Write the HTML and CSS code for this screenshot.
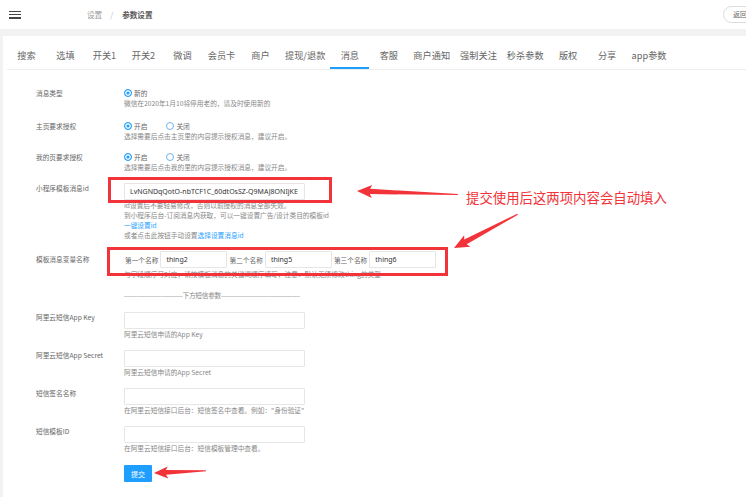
FILE: index.html
```html
<!DOCTYPE html>
<html>
<head>
    <meta charset="UTF-8">
    <title>参数设置</title>
    <link rel="stylesheet" href="styles.css">
</head>
<body>
<div class="header">
    <span class="menu-btn"><i></i><i></i><i></i></span>
    <div class="crumb"><a href="javascript:;">设置</a><span class="sep">/</span><b>参数设置</b></div>
    <a class="back" href="javascript:;">返回</a>
</div>
<div class="page">
    <div class="panel">
        <ul class="tabs">
            <li>搜索</li>
            <li>选填</li>
            <li>开关1</li>
            <li>开关2</li>
            <li>微调</li>
            <li>会员卡</li>
            <li>商户</li>
            <li>提现/退款</li>
            <li class="on">消息</li>
            <li>客服</li>
            <li>商户通知</li>
            <li>强制关注</li>
            <li>秒杀参数</li>
            <li>版权</li>
            <li>分享</li>
            <li>app参数</li>
        </ul>
        <form class="form">
            <div class="row r-radio">
                <label class="lab">消息类型</label>
                <div class="ctl">
                    <div class="radios"><span class="radio checked"></span><span class="rtxt">新的</span></div>
                    <p class="tip">微信在2020年1月10将停用老的，请及时使用新的</p>
                </div>
            </div>
            <div class="row r-radio">
                <label class="lab">主页要求授权</label>
                <div class="ctl">
                    <div class="radios"><span class="radio checked"></span><span class="rtxt">开启</span><span class="radio"></span><span class="rtxt">关闭</span></div>
                    <p class="tip">选择需要后点击主页里的内容提示授权消息，建议开启。</p>
                </div>
            </div>
            <div class="row r-radio">
                <label class="lab">我的页要求授权</label>
                <div class="ctl">
                    <div class="radios"><span class="radio checked"></span><span class="rtxt">开启</span><span class="radio"></span><span class="rtxt">关闭</span></div>
                    <p class="tip">选择需要后点击我的里的内容提示授权消息，建议开启。</p>
                </div>
            </div>
            <div class="row">
                <label class="lab">小程序模板消息id</label>
                <div class="ctl">
                    <input class="ipt" type="text" value="LvNGNDqQotO-nbTCF1C_60dtOsSZ-Q9MAJ8ONIjKE">
                    <p class="tip">id设置后不要轻易修改，否则以前授权的消息全部失效。</p>
                    <p class="tip">到小程序后台-订阅消息内获取，可以一键设置广告/设计类目的模板id</p>
                    <p class="tip"><a href="javascript:;">一键设置id</a></p>
                    <p class="tip">或者点击此按钮手动设置<a href="javascript:;">选择设置消息id</a></p>
                </div>
            </div>
            <div class="row r-vars">
                <label class="lab">模板消息变量名称</label>
                <div class="ctl">
                    <div class="vars">
                        <span>第一个名称</span><input class="ipt sm" type="text" value="thing2">
                        <span>第二个名称</span><input class="ipt sm" type="text" value="thing5">
                        <span>第三个名称</span><input class="ipt sm" type="text" value="thing6">
                    </div>
                    <p class="tip">与字段顺序号对应，请按模板消息的关键词顺序填写，注意：默认无须修改thing的类型</p>
                </div>
            </div>
            <div class="row r-line">
                <label class="lab"></label>
                <div class="ctl"><p class="tip dash">-----------------------------下方短信参数---------------------------------------</p></div>
            </div>
            <div class="row">
                <label class="lab">阿里云短信App Key</label>
                <div class="ctl">
                    <input class="ipt" type="text">
                    <p class="tip">阿里云短信申请的App Key</p>
                </div>
            </div>
            <div class="row">
                <label class="lab">阿里云短信App Secret</label>
                <div class="ctl">
                    <input class="ipt" type="text">
                    <p class="tip">阿里云短信申请的App Secret</p>
                </div>
            </div>
            <div class="row">
                <label class="lab">短信签名名称</label>
                <div class="ctl">
                    <input class="ipt" type="text">
                    <p class="tip">在阿里云短信接口后台：短信签名中查看。例如："身份验证"</p>
                </div>
            </div>
            <div class="row">
                <label class="lab">短信模板ID</label>
                <div class="ctl">
                    <input class="ipt" type="text">
                    <p class="tip">在阿里云短信接口后台：短信模板管理中查看。</p>
                </div>
            </div>
            <div class="row">
                <label class="lab"></label>
                <div class="ctl"><button class="btn" type="button">提交</button></div>
            </div>
        </form>
    </div>
</div>

<!-- 标注 -->
<div class="mark mark1"></div>
<div class="mark mark2"></div>
<div class="note">提交使用后这两项内容会自动填入</div>
<svg class="arrows" width="746" height="497" viewBox="0 0 746 497">
    <g fill="#f2333a">
        <polygon transform="translate(357 191) rotate(2)" points="0,0 15,-6.5 13,-2.6 101,-0.6 101,0.6 13,2.6 15,6.5"/>
        <polygon transform="translate(454 248) rotate(-28)" points="0,0 15,-6.5 13,-2.6 72,-0.6 72,0.6 13,2.6 15,6.5"/>
        <polygon transform="translate(154 473) rotate(-2.5)" points="0,0 14,-6 12,-2.4 52,-0.5 52,0.5 12,2.4 14,6"/>
    </g>
</svg>
</body>
</html>
```
FILE: styles.css
```css
*{margin:0;padding:0;box-sizing:border-box;}
html,body{width:746px;height:497px;overflow:hidden;}
body{background:#f2f2f2;font-family:"Noto Sans CJK SC","Noto Sans",sans-serif;color:#666;position:relative;}
ul,li{list-style:none;}
a{text-decoration:none;}

.header{height:29px;background:#fff;display:flex;align-items:center;overflow:hidden;}
.menu-btn{display:flex;flex-direction:column;justify-content:space-between;width:12px;height:8px;margin-left:9px;}
.menu-btn i{display:block;height:1.2px;background:#444;}
.crumb{margin-left:66px;font-size:7.6px;line-height:10px;color:#999;}
.crumb a{color:#999;}
.crumb .sep{margin:0 9px 0 8px;color:#bbb;}
.crumb b{color:#555;font-weight:bold;}
.back{margin-left:auto;margin-right:-12px;height:17px;line-height:15px;padding:0 10px 0 9px;border:1px solid #ddd;border-radius:9px;font-size:7px;color:#666;}

.page{padding:7px 0 0 3px;height:468px;}
.panel{background:#fff;height:100%;}

.tabs{display:flex;margin:0 0 0 4px;padding-top:5px;border-bottom:1px solid #eee;}
.tabs li{min-width:39px;height:28px;line-height:28px;padding:0 5px;text-align:center;font-size:9.2px;color:#666;white-space:nowrap;}
.tabs li.on{box-shadow:inset 0 -2px 0 #1e9fff;}

.form{padding:18px 0 0 33px;font-size:6.7px;}
.row{display:flex;margin-bottom:11px;}
.row.r-radio:first-child{margin-bottom:13px;}
.lab{width:88px;flex:none;line-height:10px;color:#666;}
.ctl{flex:1;}
.tip{line-height:10px;color:#888;white-space:nowrap;}
.tip a{color:#1e9fff;}
.radios{display:flex;align-items:center;height:10px;}
.radio{width:8px;height:8px;border:1px solid #6fb4f0;border-radius:50%;margin-right:2px;}
.radio.checked{border-color:#1e9fff;background:#1e9fff;box-shadow:inset 0 0 0 1.4px #fff;}
.rtxt{color:#666;margin-right:19px;}

.ipt{display:block;width:181px;height:17px;border:1px solid #e6e6e6;border-radius:1px;padding:0 5px;font-family:"Noto Sans","Noto Sans CJK SC",sans-serif;font-size:7px;color:#333;outline:none;background:#fff;}
.r-vars{margin-top:3px;}
.r-vars .lab{padding-top:3px;}
.r-vars .tip{margin-top:1px;}
.vars{display:flex;align-items:center;height:17px;}
.vars span{margin:0 2px 0 1px;color:#666;}
.ipt.sm{width:67px;margin-right:1px;}
.r-line{margin-top:0;margin-bottom:12px;}
.dash{letter-spacing:-0.3px;color:#888;}

.btn{width:28px;height:17px;border:0;border-radius:1px;background:#1e9fff;color:#fff;font-family:"Noto Sans CJK SC",sans-serif;font-size:7px;margin-top:1px;}

.mark{position:absolute;border:3px solid #f2333a;}
.mark1{left:108px;top:177px;width:224px;height:26px;}
.mark2{left:107px;top:247px;width:341px;height:29px;}
.note{position:absolute;left:466px;top:188px;font-size:13.4px;line-height:18px;color:#f2333a;white-space:nowrap;}
.arrows{position:absolute;left:0;top:0;}
```
